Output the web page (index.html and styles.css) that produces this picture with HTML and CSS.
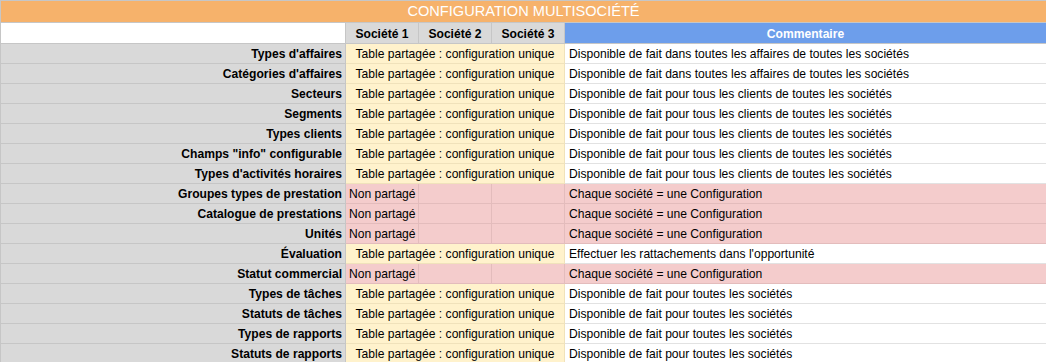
FILE: index.html
```html
<!DOCTYPE html>
<html lang="fr">
<head>
<meta charset="utf-8">
<title>Configuration multisociété</title>
<link rel="stylesheet" href="styles.css">
</head>
<body>
<table class="sheet">
  <colgroup>
    <col class="c-label">
    <col class="c-soc">
    <col class="c-soc">
    <col class="c-soc">
    <col class="c-comment">
  </colgroup>
  <tr class="title-row"><td colspan="5" class="title">CONFIGURATION MULTISOCIÉTÉ</td></tr>
  <tr class="head-row">
    <td class="blank"></td>
    <td class="soc-head">Société 1</td>
    <td class="soc-head">Société 2</td>
    <td class="soc-head">Société 3</td>
    <td class="comment-head">Commentaire</td>
  </tr>
  <tr><td class="label">Types d'affaires</td><td colspan="3" class="shared">Table partagée : configuration unique</td><td class="comment">Disponible de fait dans toutes les affaires de toutes les sociétés</td></tr>
  <tr><td class="label">Catégories d'affaires</td><td colspan="3" class="shared">Table partagée : configuration unique</td><td class="comment">Disponible de fait dans toutes les affaires de toutes les sociétés</td></tr>
  <tr><td class="label">Secteurs</td><td colspan="3" class="shared">Table partagée : configuration unique</td><td class="comment">Disponible de fait pour tous les clients de toutes les sociétés</td></tr>
  <tr><td class="label">Segments</td><td colspan="3" class="shared">Table partagée : configuration unique</td><td class="comment">Disponible de fait pour tous les clients de toutes les sociétés</td></tr>
  <tr><td class="label">Types clients</td><td colspan="3" class="shared">Table partagée : configuration unique</td><td class="comment">Disponible de fait pour tous les clients de toutes les sociétés</td></tr>
  <tr><td class="label">Champs "info" configurable</td><td colspan="3" class="shared">Table partagée : configuration unique</td><td class="comment">Disponible de fait pour tous les clients de toutes les sociétés</td></tr>
  <tr><td class="label">Types d'activités horaires</td><td colspan="3" class="shared">Table partagée : configuration unique</td><td class="comment">Disponible de fait pour tous les clients de toutes les sociétés</td></tr>
  <tr><td class="label">Groupes types de prestation</td><td class="own">Non partagé</td><td class="own"></td><td class="own"></td><td class="own-comment">Chaque société = une Configuration</td></tr>
  <tr><td class="label">Catalogue de prestations</td><td class="own">Non partagé</td><td class="own"></td><td class="own"></td><td class="own-comment">Chaque société = une Configuration</td></tr>
  <tr><td class="label">Unités</td><td class="own">Non partagé</td><td class="own"></td><td class="own"></td><td class="own-comment">Chaque société = une Configuration</td></tr>
  <tr><td class="label">Évaluation</td><td colspan="3" class="shared">Table partagée : configuration unique</td><td class="comment">Effectuer les rattachements dans l'opportunité</td></tr>
  <tr><td class="label">Statut commercial</td><td class="own">Non partagé</td><td class="own"></td><td class="own"></td><td class="own-comment">Chaque société = une Configuration</td></tr>
  <tr><td class="label">Types de tâches</td><td colspan="3" class="shared">Table partagée : configuration unique</td><td class="comment">Disponible de fait pour toutes les sociétés</td></tr>
  <tr><td class="label">Statuts de tâches</td><td colspan="3" class="shared">Table partagée : configuration unique</td><td class="comment">Disponible de fait pour toutes les sociétés</td></tr>
  <tr><td class="label">Types de rapports</td><td colspan="3" class="shared">Table partagée : configuration unique</td><td class="comment">Disponible de fait pour toutes les sociétés</td></tr>
  <tr><td class="label">Statuts de rapports</td><td colspan="3" class="shared">Table partagée : configuration unique</td><td class="comment">Disponible de fait pour toutes les sociétés</td></tr>
</table>
</body>
</html>
```

FILE: styles.css
```css
html, body {
  margin: 0;
  padding: 0;
  overflow: hidden;
  background: #ffffff;
}

.sheet {
  border-collapse: collapse;
  table-layout: fixed;
  width: 1046px;
  font-family: "Liberation Sans", Arial, sans-serif;
  font-size: 12.1px;
  color: #000000;
}

.c-label { width: 345px; }
.c-soc { width: 73px; }
.c-comment { width: 482px; }

.sheet td {
  height: 17px;
  padding: 2px 3px 0 3px;
  border: 1px solid #c6c6c6;
  white-space: nowrap;
  overflow: hidden;
  line-height: 17px;
  vertical-align: middle;
}

.title-row td.title {
  height: 21px;
  padding-top: 0;
  line-height: 21px;
  background: #f6b26b;
  color: #ffffff;
  font-size: 14.6px;
  text-align: center;
  border-color: #c6c6c6;
}

.head-row td {
  height: 18px;
  line-height: 18px;
}

.head-row td.blank {
  background: #ffffff;
}

.soc-head {
  background: #d9d9d9;
  font-weight: bold;
  text-align: center;
}

.comment-head {
  background: #6d9eeb;
  color: #ffffff;
  font-weight: bold;
  text-align: center;
  border-color: #6d9eeb #6d9eeb #c6c6c6 #c6c6c6 !important;
}

.label {
  background: #d9d9d9;
  font-weight: bold;
  text-align: right;
}

.shared {
  background: #fff2cc;
  text-align: center;
  border-color: #f0e2bb !important;
}

.comment {
  background: #ffffff;
  text-align: left;
  padding-left: 4px !important;
  border-color: #e2e2e2 !important;
}

.own {
  background: #f4cccc;
  text-align: left;
  overflow: visible !important;
  border-color: #e3bcbc !important;
}

.own-comment {
  background: #f4cccc;
  text-align: left;
  padding-left: 4px !important;
  border-color: #e3bcbc !important;
}
```
